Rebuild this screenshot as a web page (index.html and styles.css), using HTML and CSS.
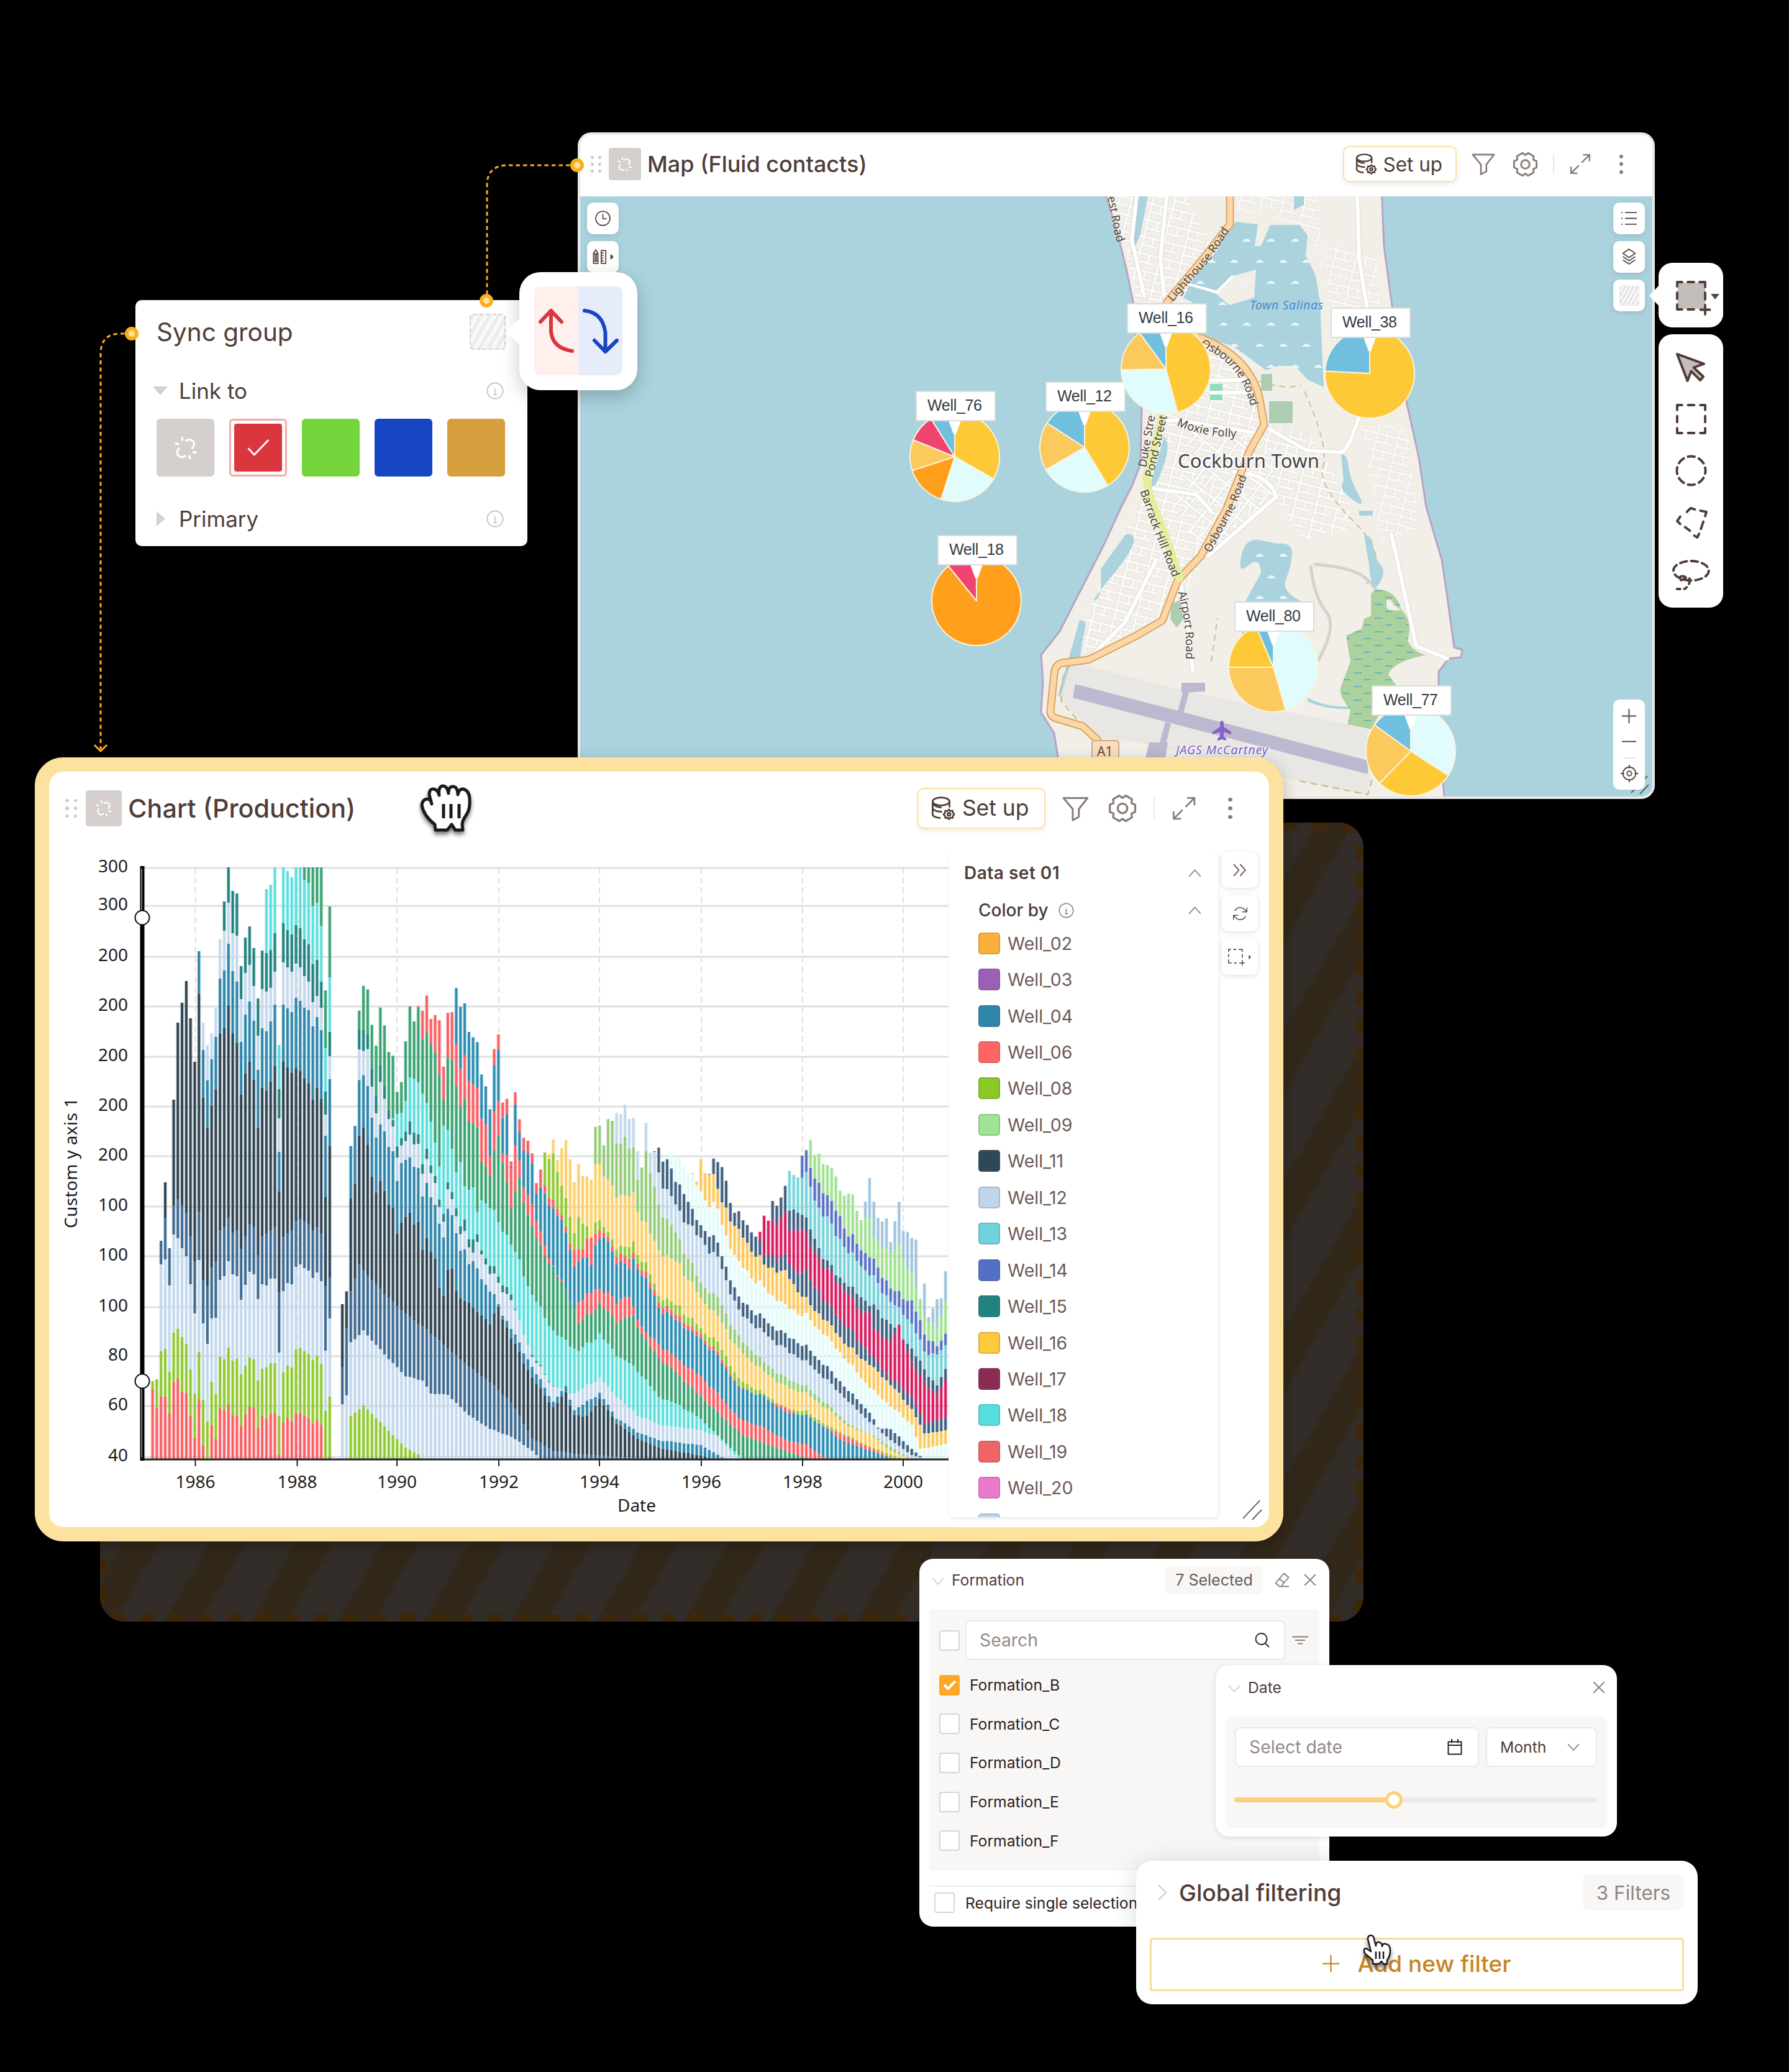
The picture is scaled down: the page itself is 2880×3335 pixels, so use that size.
FILE: index.html
```html
<!DOCTYPE html>
<html lang="en">
<head>
    <meta charset="UTF-8">
    <meta name="viewport" content="width=device-width, initial-scale=1.0">
    <title>Dashboard sync and filtering</title>
    <link rel="stylesheet" href="styles.css">
</head>
<body>
    <svg class="defs" width="0" height="0">
        <symbol id="unlink" viewBox="0 0 24 24"><path d="M12 5.500a4.600 4.600 0 0 1 7.500 5.200l-1.600 2M12 19a4.600 4.600 0 0 1-7.800-4.800l1.400-2.200M8.300 1l.6 4M1.500 7.500l4 .8M15.500 19l.5 4M18.600 16l4 .6" /></symbol>
        <symbol id="info" viewBox="0 0 24 24"><circle cx="12" cy="12" r="10.8" /><path d="M10.5 10.5H12V17M10 17h4.5M12 6.8v.6" /></symbol>
        <symbol id="db" viewBox="0 0 24 24"><ellipse cx="10" cy="5" rx="8.5" ry="4" /><path d="M1.500 5v13c0 2 3.500 3.500 8 3.700M18.500 5v6M1.500 11.500c0 2.200 3.800 4 9.500 4M1.500 6.500c1 3.500 6 4.500 9 4.500" /><path d="M18 13.200l1.500 1.500 2.200-.3.400 2.200 1.400 1.400-1.400 1.500-.4 2.200-2.200-.3-1.500 1.600-1.500-1.600-2.200.3-.4-2.200-1.400-1.500 1.400-1.400.4-2.200 2.200.3z" /><circle cx="18" cy="18" r="1.500" /></symbol>
        <symbol id="funnel" viewBox="0 0 24 24"><path d="M1.200 2.500h21.600L15 12.500v7l-5.500 3v-10z" /></symbol>
        <symbol id="gear" viewBox="0 0 24 24"><path d="M22.600 9v6l-3.100 1.400.4 3.200-5.200 3.100-2.700-2-2.700 2-5.200-3.100.4-3.200L1.400 15V9l3.100-1.400-.4-3.200 5.200-3.100 2.700 2 2.700-2 5.200 3.100-.4 3.200z" /><circle cx="12" cy="12" r="4" /></symbol>
        <symbol id="expand" viewBox="0 0 24 24"><path d="M15 1.500h7.500V9M22 2l-8.500 8.500M9 22.500H1.500V15M2 22l8.500-8.500" /></symbol>
        <symbol id="down" viewBox="0 0 24 24"><path d="M1.500 6L12 18 22.500 6" /></symbol>
        <symbol id="up" viewBox="0 0 24 24"><path d="M1.500 18L12 6l10.500 12" /></symbol>
        <symbol id="close" viewBox="0 0 24 24"><path d="M1.500 1.500l21 21M22.500 1.500l-21 21" /></symbol>
        <symbol id="plus" viewBox="0 0 24 24"><path d="M12 0v24M0 12h24" /></symbol>
    </svg>

    <!-- drop zone behind the chart -->
    <svg class="dropzone" viewBox="0 0 2034 1286">
        <defs>
            <pattern id="stripes" width="120.600" height="120.600" patternUnits="userSpaceOnUse" patternTransform="translate(48 1140) rotate(30)">
                <rect width="51" height="121" fill="#32281a" />
            </pattern>
        </defs>
        <rect width="2034" height="1286" rx="40" fill="#322d29" />
        <rect width="2034" height="1286" rx="40" fill="url(#stripes)" />
        <rect class="dashes" x="6" y="6" width="2022" height="1274" rx="34" />
    </svg>

    <!-- map -->
    <section class="window map-window">
        <header class="window-head">
            <span class="grip"><i></i><i></i><i></i><i></i><i></i><i></i></span>
            <span class="sync-box"><svg><use href="#unlink" /></svg></span>
            <h2>Map (Fluid contacts)</h2>
            <button class="setup"><svg><use href="#db" /></svg><span>Set up</span></button>
            <svg class="ico funnel"><use href="#funnel" /></svg>
            <svg class="ico gear"><use href="#gear" /></svg>
            <span class="rule"></span>
            <svg class="ico expand"><use href="#expand" /></svg>
            <span class="more"><i></i><i></i><i></i></span>
        </header>
        <div class="map-body">
            <svg class="map" viewBox="934 316 1726 966">
                <defs>
                    <pattern id="streets" width="34" height="27" patternUnits="userSpaceOnUse" patternTransform="rotate(14)">
                        <path d="M0 5H34M9 0V27M9 18H34M25 5V18" fill="none" stroke="#d9d5d0" stroke-width="5" />
                        <path d="M0 5H34M9 0V27M9 18H34M25 5V18" fill="none" stroke="#fff" stroke-width="3.400" />
                    </pattern>
                    <pattern id="streets2" width="44" height="32" patternUnits="userSpaceOnUse" patternTransform="rotate(38)">
                        <path d="M0 6H44M12 0V32M30 6V32" fill="none" stroke="#d9d5d0" stroke-width="5" />
                        <path d="M0 6H44M12 0V32M30 6V32" fill="none" stroke="#fff" stroke-width="3.400" />
                    </pattern>
                    <pattern id="marsh" width="34" height="22" patternUnits="userSpaceOnUse">
                        <path d="M3 5h13M20 16h11" stroke="#6fb0bd" stroke-width="2" />
                    </pattern>
                    <path id="p-light" d="M1884 483L1945 414 1979 362V316" />
                    <path id="p-osb1" d="M1934 553Q2012 583 2023 680" />
                    <path id="p-osb2" d="M1944 888L1985 812 2020 718" />
                    <path id="p-barrack" d="M1840 789L1862 852 1895 934" />
                    <path id="p-airport" d="M1901 952Q1918 1010 1913 1075" />
                    <path id="p-moxie" d="M1896 680Q1940 700 2010 699" />
                    <path id="p-west" d="M1788 316L1800 380 1808 400" />
                </defs>
                <rect x="934" y="316" width="1726" height="966" fill="#aad3de" />
                <path class="land" d="M1776 300L1800 379 1813 432 1824 486 1838 659 1836 747 1822 783 1804 818 1776 879 1734 961 1706 1016 1676 1054 1679 1098 1676 1147 1697 1180 1703 1218 1710 1290H2326L2323 1260 2310 1180 2316 1103V1081L2332 1060 2352 1058 2354 1046 2341 1042 2330 962 2321 901 2296 816 2284 736 2264 646 2238 471 2228 396 2224 300z" />
                <path d="M1790 316L1912 316 1960 420 1900 480 1960 560 2030 610 2030 680 2110 700 2170 800 2175 850 2100 870 2050 800 1940 900 1890 980 1760 1050 1720 1045 1790 900 1845 780 1850 640 1822 440z" fill="url(#streets)" opacity=".8" />
                <path d="M1920 690L2030 690 2060 800 1940 890 1890 820z" fill="url(#streets2)" />
                <path d="M1990 316h130l20 250-10-120-20-80-70-20-50-10zM2135 390l80 20 15 140-90-30zM2190 680l75 10 20 160-60 20z" fill="url(#streets)" opacity=".65" />
                <g fill="none" stroke="#d6d1cb" stroke-width="2">
                    <path d="M2100 630q40 90 30 120t50 90 20 100M1995 600q60 30 100 20M1950 1065l10-70M2060 1000q10 40 20 70M1900 1110l70 40 70 60" stroke="#d0bd98" stroke-dasharray="10 7" />
                    <path d="M2115 908q60 5 80 20t45 60M2110 910q5 50 25 75t-20 90" stroke-width="5" />
                </g>
                <path class="water" d="M1989 357L2025 361 2020 396 2030 396 2045 362 2092 362 2105 379 2102 411 2118 443 2125 486 2128 557 2131 623 2105 611 2085 589 2058 589 2038 596 1985 557 1939 543 1900 520 1919 486 1905 480 1919 450 1959 404 1972 379zM2083 316h16v14l-16 8z" />
                <path class="land-flat" d="M1915 459L1960 470 1985 444 2022 434 2019 479 1979 491 1958 473z" />
                <path d="M1912 457l47 13 26-26" fill="none" stroke="#fff" stroke-width="4" />
                <path class="water" d="M1826 316h22l-12 60-14 36zM2159 731q10 0 12 20t16 45-10 8-14-30zM2188 822h22v8h-22zM2196 862q12-2 15 18t12 30-3 30-16-30zM2058 875q24-2 22 18t-10 40 28 36v20l-40 60-60-20 8-63 24-44q-2-28-20-12t-12-14 28-27zM1812 860q18-2 12 16t-38 56-22 34 8-50zM1738 998q12 0 9 12t-10 60-34 50zM1874 703q12 10-2 50t-20 26zM2105 1123q30 16 70 14v4q-40 2-70-12z" />
                <g class="foams" id="foams"></g>
                <path d="M2220 949Q2247 950 2256 981 2275 1000 2266 1031 2275 1050 2296 1054 2240 1066 2235 1086L2247 1102 2212 1165 2196 1205 2165 1190 2174 1142Q2155 1120 2158 1107L2174 1065 2167 1023 2192 1012 2196 996 2207 991V958Q2210 948 2220 949z" fill="#abd29e" />
                <path d="M2220 949Q2247 950 2256 981 2275 1000 2266 1031 2275 1050 2296 1054 2240 1066 2235 1086L2247 1102 2212 1165 2196 1205 2165 1190 2174 1142Q2155 1120 2158 1107L2174 1065 2167 1023 2192 1012 2196 996 2207 991V958Q2210 948 2220 949z" fill="url(#marsh)" />
                <path class="land-flat" d="M2232 966q8-4 12 8l12 8q-20 2-24-4z" />
                <path d="M2043 646h38v35h-38zM2030 602h18v27h-18zM1886 972l14-6 6 30-12 14-10-14z" fill="#adcdb0" />
                <path d="M1948 618h20v26h-20z" fill="#88e0bd" />
                <path d="M1724 1065L1900 1110 2214 1175 2202 1279 2092 1257 1841 1197 1767 1186 1706 1125z" fill="#e9e7e4" />
                <path d="M2092 1257l110 22 12-44M1724 1070q-20 20-15 60l40 45" fill="none" stroke="#d0bd98" stroke-width="2.500" stroke-dasharray="11 7" />
                <path d="M1731 1101L2202 1224V1246L1727 1123zM1905 1112l9 3-10 36-9-3zM1876 1162l9 3-10 40-10-3zM1850 1195h30l-4 26h-32zM1902 1099h38v14l-38 2z" fill="#bbb8d0" />
                <g class="road white">
                    <path d="M2037 687L2104 725 2159 728Q2170 726 2187 673M2055 799L1945 895M1870 678L1896 676 2022 697M1847 785L1926 796 1951 824M1985 760Q2040 760 2055 799M1902 944L1912 1000 1920 1079M1905 612H2018M1950 632H2012M1830 316l-8 70 20 90M2185 316l3 100 16 100M1878 316l-10 100 6 60M2240 860l40 180 50 20M1751 1062l60-60 50-100" />
                </g>
                <g class="road">
                    <path class="casing" d="M1980 300V361L1939 414 1879 486 1865 520M1922 540Q2012 570 2028 643L2035 684 2012 725 1975 818 1933 895 1896 934 1871 999 1828 1024 1752 1062 1710 1067Q1698 1070 1697 1085L1691 1145Q1691 1153 1700 1156L1743 1169 1767 1191" />
                    <path class="fill" d="M1980 300V361L1939 414 1879 486 1865 520M1922 540Q2012 570 2028 643L2035 684 2012 725 1975 818 1933 895 1896 934 1871 999 1828 1024 1752 1062 1710 1067Q1698 1070 1697 1085L1691 1145Q1691 1153 1700 1156L1743 1169 1767 1191" />
                    <path class="lime" d="M1871 668L1846 769 1850 797 1875 860 1899 930" />
                </g>
                <g class="road-name">
                    <text><textPath href="#p-light">Lighthouse Road</textPath></text>
                    <text><textPath href="#p-osb1">Osbourne Road</textPath></text>
                    <text><textPath href="#p-osb2">Osbourne Road</textPath></text>
                    <text><textPath href="#p-barrack">Barrack Hill Road</textPath></text>
                    <text><textPath href="#p-airport">Airport Road</textPath></text>
                    <text><textPath href="#p-moxie">Moxie Folly</textPath></text>
                    <text><textPath href="#p-west">est Road</textPath></text>
                    <text transform="translate(1840 752) rotate(-80)">Duke Stre</text>
                    <text transform="translate(1851 768) rotate(-77)">Pond Street</text>
                </g>
                <text class="town" x="1896" y="753" textLength="228">Cockburn Town</text>
                <text class="lake-name" x="2012" y="498" textLength="118">Town Salinas</text>
                <path d="M1967 1160q3 0 3 6v4l12 8v4l-12-4v7l4 4v3l-7-2-7 2v-3l4-4v-7l-12 4v-4l12-8v-4q0-6 3-6z" fill="#8461c4" />
                <text class="airport" x="1893" y="1214" textLength="148">JAGS McCartney</text>
                <rect x="1758" y="1192" width="43" height="40" rx="4" fill="#f6dcc0" stroke="#d6a87e" stroke-width="2" />
                <text class="badge" x="1766" y="1217">A1</text>
                <g id="wells"></g>
            </svg>
            <div class="map-tools left">
                <span class="tool"><svg viewBox="0 0 24 24"><circle cx="12" cy="12" r="11" /><path d="M12 5v7.500h6" /></svg></span>
                <span class="tool"><svg class="wide" viewBox="0 0 34 24"><path d="M2 6.500L5.500 1 9 6.500V22H2zM2 7h7M2 18.500h7M4.500 7v11M6.700 7v11M14 2h7v20h-7zM14 6h3.500M14 10h3.500M14 14h3.500M14 18h3.500" /><path d="M29 9l3 3-3 3z" fill="#5a4741" /></svg></span>
            </div>
            <div class="map-tools right">
                <span class="tool"><svg viewBox="0 0 24 24"><path d="M6 3h18M6 12h18M6 21h18M0 3h2M0 12h2M0 21h2" /></svg></span>
                <span class="tool"><svg viewBox="0 0 24 24"><path d="M12 0l9.500 6.500L12 13 2.500 6.500zM2.500 11.500L12 18l9.500-6.500M2.500 16.500L12 23l9.500-6.500" /></svg></span>
                <span class="tool"><span class="hatch"></span></span>
            </div>
            <svg class="resize" viewBox="0 0 30 30"><path d="M1 28L27 1M15 30L29 15" /></svg>
            <div class="zoom">
                <svg viewBox="0 0 24 24"><use href="#plus" /></svg>
                <svg viewBox="0 0 24 24"><path d="M0 12h24" /></svg>
                <span class="zoom-rule"></span>
                <svg class="target" viewBox="0 0 30 30"><circle cx="15" cy="15" r="11" /><circle cx="15" cy="15" r="4" /><path d="M15 0v6M15 24v6M0 15h6M24 15h6" /></svg>
            </div>
        </div>
    </section>

    <!-- selection tools -->
    <aside class="select-current">
        <svg viewBox="0 0 72 50">
            <rect x="3" y="3" width="44" height="42" fill="#c4bebb" stroke="none" />
            <path d="M2 9V2h8M19 2h10M38 2h9v8M47 19v11M2 19v10M2 38v8h8M19 46h10M47 39v15M39.500 46.500h15" />
            <path d="M56 21h14l-7 9z" fill="#5a4741" stroke="none" />
        </svg>
    </aside>
    <aside class="select-tools">
        <svg viewBox="0 0 50 50"><path d="M2 3L46 19 29 25 45 40 40 46 25 31 19 47z" fill="#c4bebb" /></svg>
        <svg viewBox="0 0 50 50"><path d="M2 10V2h8M20 2h10M40 2h8v8M48 20v10M2 20v10M2 40v8h8M20 48h10M48 40v8H40" /></svg>
        <svg viewBox="0 0 50 50"><circle cx="25" cy="25" r="23.500" stroke-dasharray="11 7.460" stroke-dashoffset="6" /></svg>
        <svg viewBox="0 0 50 50"><path d="M18 8l6-6 7 2M40 6l10 2-2 7M45 24l-4 12M38 44l-3 6-5-3M23 39l-8-6M7 28L2 23l5-7" /></svg>
        <svg viewBox="0 0 62 50"><ellipse cx="31" cy="20" rx="29" ry="16" stroke-dasharray="11 7" /><path d="M21 30q-8-3-10 3 3 5 9 0 9-6 9 4-2 9-9 13M8 50h5" stroke-dasharray="9 7" /></svg>
    </aside>

    <!-- sync group -->
    <section class="sync">
        <header><h2>Sync group</h2><span class="hatch"></span></header>
        <div class="sync-row"><i class="tri open"></i><span>Link to</span><svg class="info"><use href="#info" /></svg></div>
        <div class="swatches">
            <span class="none"><svg><use href="#unlink" /></svg></span>
            <span class="red"><b><svg viewBox="0 0 36 28"><path d="M1 15l10 11L35 1" /></svg></b></span>
            <span class="green"></span>
            <span class="blue"></span>
            <span class="gold"></span>
        </div>
        <div class="sync-row primary"><i class="tri"></i><span>Primary</span><svg class="info"><use href="#info" /></svg></div>
    </section>

    <div class="direction">
        <svg viewBox="0 0 142 143">
            <path d="M27 39V72Q29 99 61 104M10 57L27 39 44 57" stroke="#d9363e" />
            <path d="M81 39Q110 42 114.500 74V105M97 87l17.500 18L133 87" stroke="#1746c4" />
        </svg>
    </div>

    <svg class="wires" viewBox="0 0 1000 1220">
        <path d="M929 266H814Q784 268 784 298V484M212 537H192Q162 538 162 570V1206" stroke-dasharray="6.500 5" />
        <path d="M152 1199l10 10 10-10" />
        <g><circle cx="929" cy="266" r="8" /><circle cx="783" cy="484" r="8" /><circle cx="212" cy="537" r="8" /></g>
    </svg>

    <!-- chart -->
    <section class="window chart-window">
        <header class="window-head">
            <span class="grip"><i></i><i></i><i></i><i></i><i></i><i></i></span>
            <span class="sync-box"><svg><use href="#unlink" /></svg></span>
            <h2>Chart (Production)</h2>
            <button class="setup"><svg><use href="#db" /></svg><span>Set up</span></button>
            <svg class="ico funnel"><use href="#funnel" /></svg>
            <svg class="ico gear"><use href="#gear" /></svg>
            <span class="rule"></span>
            <svg class="ico expand"><use href="#expand" /></svg>
            <span class="more"><i></i><i></i><i></i></span>
        </header>
        <div class="chart-body">
            <svg class="chart" id="chart" viewBox="79 1360 1449 1097"></svg>
            <div class="legend">
                <div class="legend-title"><b>Data set 01</b><svg class="chev"><use href="#up" /></svg></div>
                <div class="legend-sub"><span>Color by</span><svg class="info"><use href="#info" /></svg><svg class="chev"><use href="#up" /></svg></div>
                <ul id="legend"></ul>
            </div>
            <div class="chart-tools">
                <span class="tool"><svg viewBox="0 0 24 24"><path d="M2 3l8 9-8 9M12 3l8 9-8 9" /></svg></span>
                <span class="tool"><svg viewBox="0 0 28 28"><path d="M4 9Q8 3 14 3q6 0 11 7M26 3v8h-8M24 19q-4 6-10 6-6 0-11-7M2 25v-8h8" /></svg></span>
                <span class="tool"><svg class="wide" viewBox="0 0 42 30"><path d="M2 6V2h4M10 2h5M19 2h6v4M25 10v6M2 10v5M2 19v6h5M11 25h5M25 20v9M20 25h9" /><path d="M36 11l4 4-4 4z" fill="#5a4741" stroke="none" /></svg></span>
            </div>
            <svg class="resize" viewBox="0 0 34 34"><path d="M1 32L30 1M17 34L33 17" /></svg>
        </div>
    </section>

    <svg class="cursor grab" viewBox="-4 -4 88 84"><path d="M0 31Q1 22 8 21 15 21 16 29L12 14Q12 4 19 5 26 6 28 15 26 1 34 0 41 0 43 12 43 0 51 1 58 2 58 14 60 4 67 5 77 8 77 22 78 37 72 46 65 56 65 62L66 71 54 71 48 62 41 71H22L21 62Q3 48 0 31z" /><path d="M35 29V52M47 29V52M60 29V52" /></svg>

    <!-- formation filter -->
    <section class="filter formation">
        <header><svg class="fold"><use href="#down" /></svg><h3>Formation</h3><span class="tag">7 Selected</span><svg class="eraser" viewBox="0 0 24 24"><path d="M8 22.500L1.500 17 15 1.500l7.500 6.500L10 22.500zM7.500 10l8 7M8 22.500h15" /></svg><svg class="x"><use href="#close" /></svg></header>
        <div class="panel">
            <div class="search-row">
                <i class="check"></i>
                <div class="input">Search<svg viewBox="0 0 24 24"><circle cx="10.500" cy="10" r="9" /><path d="M17 17l6 6" /></svg></div>
                <svg class="sort" viewBox="0 0 26 14"><path d="M0 1.500h26M5 7h16M9 12.500h8" /></svg>
            </div>
            <div class="option"><i class="check on"><svg viewBox="0 0 22 18"><path d="M2 9l6 6L20 3" /></svg></i>Formation_B</div>
            <div class="option"><i class="check"></i>Formation_C</div>
            <div class="option"><i class="check"></i>Formation_D</div>
            <div class="option"><i class="check"></i>Formation_E</div>
            <div class="option"><i class="check"></i>Formation_F</div>
        </div>
        <footer><i class="check"></i>Require single selection</footer>
    </section>

    <!-- date filter -->
    <section class="filter date">
        <header><svg class="fold"><use href="#down" /></svg><h3>Date</h3><svg class="x"><use href="#close" /></svg></header>
        <div class="panel">
            <div class="date-row">
                <div class="input">Select date<svg viewBox="0 0 24 26"><path d="M1.500 4.500h21v20h-21zM1.500 10h21M7 0v6.500M17 0v6.500" /></svg></div>
                <div class="select">Month<svg><use href="#down" /></svg></div>
            </div>
            <div class="slider"><span class="slider-fill"></span><i></i></div>
        </div>
    </section>

    <!-- global filtering -->
    <section class="global">
        <header><svg viewBox="0 0 14 26"><path d="M1 1l12 12L1 25" /></svg><h2>Global filtering</h2><span class="tag">3 Filters</span></header>
        <button class="add"><svg><use href="#plus" /></svg>Add new filter</button>
    </section>

    <svg class="cursor point" viewBox="-3 -3 52 54"><path d="M7 6Q7 0 12 0 16 0 17 6L20 17Q20 10 25 11 30 12 30 18 31 12 36 14 43 15 43 24 43 33 38 40V46L32 46 29 42 25 46H15V40L2 29Q-1 21 4 21L12 26z" /><path d="M20 26V38M26 26V38M32 26V38" /></svg>

    <script src="script.js"></script>
</body>
</html>
```

FILE: styles.css
```css
* {
    box-sizing: border-box;
}
body {
    margin: 0;
    position: relative;
    width: 2880px;
    height: 3335px;
    overflow: hidden;
    background: #000;
    color: #503d38;
    font-family: Inter, "Liberation Sans", sans-serif;
    white-space: nowrap;
}
h2, h3, ul {
    margin: 0;
    padding: 0;
    font-weight: 400;
    list-style: none;
}
svg {
    display: block;
    flex: none;
    fill: none;
    stroke: currentColor;
    stroke-linejoin: round;
    overflow: visible;
}
button {
    font-family: inherit;
    color: inherit;
    background: #fff;
    display: flex;
    align-items: center;
}
.defs {
    position: absolute;
}

/* windows */
.window {
    position: absolute;
    background: #fff;
    display: flex;
    flex-direction: column;
}
.window-head {
    flex: none;
    display: flex;
    align-items: center;
}
.window-head h2 {
    font-size: 3.6em;
    font-weight: 450;
    margin-right: auto;
}
.grip {
    display: grid;
    grid-template-columns: repeat(2, .5em);
    gap: .6em .7em;
    margin-right: 1.2em;
}
.grip i {
    height: .5em;
    border-radius: 50%;
    background: #cfcac8;
}
.sync-box {
    width: 5.15em;
    height: 5.15em;
    margin-right: 1.05em;
    border-radius: .4em;
    background: #d5d0ce;
    display: flex;
    align-items: center;
    justify-content: center;
    color: #fff;
}
.sync-box svg {
    width: 2.5em;
    height: 2.5em;
    stroke-width: 2;
}
.setup {
    height: 5.85em;
    width: 18.3em;
    padding: 0 0 0 1.8em;
    gap: 1.05em;
    font-size: 1em;
    border: .26em solid #fbe2a4;
    border-radius: 1em;
    box-shadow: 0 4px 8px rgba(0, 0, 0, .08);
}
.setup span {
    font-size: 3.15em;
}
.setup svg {
    width: 3.4em;
    height: 3.4em;
    stroke-width: 1.7;
}
.ico {
    color: #8a7d79;
    stroke-width: 1.7;
}
.funnel {
    width: 3.8em;
    height: 3.8em;
    margin-left: 2.4em;
}
.gear {
    width: 4.1em;
    height: 4.1em;
    margin-left: 2.8em;
}
.rule {
    width: 2px;
    height: 3.2em;
    margin: 0 2.5em 0 2.4em;
    background: #ebe8e7;
}
.expand {
    width: 3.4em;
    height: 3.4em;
}
.more {
    display: grid;
    gap: .65em;
    margin-left: 4.6em;
}
.more i {
    width: .6em;
    height: .6em;
    border-radius: 50%;
    background: #8a7d79;
}
.tool {
    display: flex;
    align-items: center;
    justify-content: center;
    width: 51px;
    height: 51px;
    border-radius: 10px;
    background: #fff;
    color: #5a4741;
    box-shadow: 0 2px 8px rgba(0, 0, 0, .12);
}
.tool svg {
    width: 25px;
    height: 25px;
    stroke-width: 1.7;
}
.tool .wide {
    width: 36px;
}
.hatch {
    border: 1px dashed #cfcfcf;
    border-radius: 4px;
    background: repeating-linear-gradient(120deg, #ececec 0 6px, #f8f8f8 6px 12px);
}

/* map window */
.map-window {
    left: 930px;
    top: 213px;
    width: 1734px;
    height: 1073px;
    border: 4px solid #ebe9e8;
    border-radius: 22px;
    overflow: hidden;
}
.map-window .window-head {
    height: 99px;
    padding: 0 47px 5px 17px;
    font-size: 10px;
}
.map-body {
    position: relative;
    flex: 1;
    overflow: hidden;
}
.map {
    width: 1726px;
    height: 966px;
    stroke: none;
    overflow: hidden;
}
.land {
    fill: #f2efe9;
    stroke: #b9a3c4;
    stroke-width: 3;
}
.land-flat {
    fill: #f2efe9;
}
.water {
    fill: #aad3de;
}
.foams {
    fill: #e8f6fa;
}
.road {
    fill: none;
    stroke-linecap: round;
}
.white path {
    stroke: #fff;
    stroke-width: 6;
    filter: drop-shadow(0 0 1px #c9c4bf);
}
.casing {
    stroke: #d9a565;
    stroke-width: 13;
}
.fill {
    stroke: #fcd6a4;
    stroke-width: 9;
}
.lime {
    stroke: #e6ee9c;
    stroke-width: 13;
}
.road-name, .town, .lake-name, .airport, .badge {
    font-family: "Noto Sans", "Open Sans", sans-serif;
    paint-order: stroke;
}
.road-name {
    font-size: 18.5px;
    fill: #4c4238;
    stroke: rgba(255, 255, 255, .45);
    stroke-width: 2;
}
.road-name text {
    dominant-baseline: middle;
}
.town {
    font-size: 31px;
    fill: #444;
    stroke: rgba(255, 255, 255, .8);
    stroke-width: 4;
}
.lake-name {
    font-size: 19.5px;
    font-style: italic;
    fill: #4a8ad0;
}
.airport {
    font-size: 20px;
    font-style: italic;
    fill: #8461c4;
    stroke: rgba(255, 255, 255, .6);
    stroke-width: 3;
}
.badge {
    font-size: 21px;
    fill: #6b4a33;
}
.well-pie path {
    stroke: #fbf3dd;
    stroke-width: 2;
}
.well-tag rect {
    fill: #fff;
    stroke: #dcdcdc;
    stroke-width: 2;
}
.well-tag text {
    font-family: "Liberation Sans", Arial, sans-serif;
    font-size: 25px;
    fill: #333a44;
}
.map-tools {
    position: absolute;
    top: 10px;
    display: grid;
    gap: 11px;
}
.map-tools.left {
    left: 11px;
}
.map-tools.right {
    right: 12px;
}
.map-tools .hatch {
    width: 32px;
    height: 32px;
    border-color: #e4e4e4;
    background: repeating-linear-gradient(120deg, #e4e4e4 0 3px, #fafafa 3px 6px);
}
.zoom {
    position: absolute;
    right: 12px;
    bottom: 11px;
    width: 51px;
    height: 145px;
    padding-top: 15px;
    border-radius: 10px;
    background: #fff;
    display: flex;
    flex-direction: column;
    align-items: center;
    gap: 18px;
    color: #5a4741;
}
.zoom svg {
    width: 23px;
    height: 23px;
    stroke-width: 2;
}
.zoom-rule {
    width: 20px;
    height: 2px;
    margin: -4px 0;
    background: #e8e5e4;
}
.zoom .target {
    width: 28px;
    height: 28px;
    margin-top: -4px;
}
.resize {
    position: absolute;
    right: 5px;
    bottom: 4px;
    width: 30px;
    height: 30px;
    color: #6b5d59;
    stroke-width: 2;
}

/* selection tools */
.select-current, .select-tools {
    position: absolute;
    left: 2670px;
    width: 104px;
    border-radius: 22px;
    background: #fff;
    stroke-linecap: round;
}
.select-current {
    top: 423px;
    height: 104px;
    padding: 29px 0 0 28px;
}
.select-current::before {
    content: "";
    position: absolute;
    left: -15px;
    top: 36px;
    border: solid transparent;
    border-width: 17px 16px 17px 0;
    border-right-color: #fff;
}
.select-current svg {
    width: 72px;
    height: 50px;
    stroke-width: 3.8;
}
.select-tools {
    top: 538px;
    height: 440px;
    padding-top: 29px;
    display: flex;
    flex-direction: column;
    align-items: center;
    gap: 34px;
}
.select-tools svg {
    height: 49px;
    stroke-width: 4;
}

/* sync group */
.sync {
    position: absolute;
    left: 218px;
    top: 483px;
    width: 631px;
    height: 396px;
    padding: 21px 35px 0 34px;
    border-radius: 10px;
    background: #fff;
}
.sync header {
    display: flex;
    align-items: center;
    justify-content: space-between;
    height: 60px;
}
.sync h2 {
    font-size: 40.5px;
}
.sync .hatch {
    width: 58px;
    height: 58px;
    border-width: 2px;
    border-radius: 6px;
}
.sync-row {
    display: flex;
    align-items: center;
    height: 44px;
    margin-top: 43px;
    padding-right: 3px;
    font-size: 35px;
}
.sync-row span {
    flex: 1;
}
.sync-row .info {
    width: 28px;
    height: 28px;
    color: #cfcac8;
    stroke-width: 1.8;
}
.tri {
    width: 36px;
}
.tri::before {
    content: "";
    display: block;
    width: 0;
    border: solid transparent;
    border-width: 12px 0 12px 14px;
    border-left-color: #d5d0ce;
}
.tri.open::before {
    margin-left: -6px;
    border-width: 14px 12px 0;
    border-color: #d5d0ce transparent;
}
.swatches {
    display: flex;
    gap: 24px;
    margin-top: 23px;
}
.swatches > span {
    width: 93px;
    height: 93px;
    border-radius: 6px;
    display: flex;
    align-items: center;
    justify-content: center;
    color: #fff;
}
.swatches .none {
    background: #d5d0ce;
}
.swatches .none svg {
    width: 40px;
    height: 40px;
    stroke-width: 2;
}
.swatches .red {
    border: 3px solid #f4a9a6;
}
.swatches b {
    width: 77px;
    height: 77px;
    border-radius: 4px;
    background: #d9363e;
    display: flex;
    align-items: center;
    justify-content: center;
}
.swatches b svg {
    width: 36px;
    height: 27px;
    stroke-width: 3;
}
.swatches .green {
    background: #74d43c;
}
.swatches .blue {
    background: #1746c4;
}
.swatches .gold {
    background: #d69e3c;
}
.sync-row.primary {
    margin-top: 46px;
}

.direction {
    position: absolute;
    left: 836px;
    top: 438px;
    width: 190px;
    height: 190px;
    padding: 23px 24px;
    border-radius: 34px;
    background: #fff;
    box-shadow: 0 10px 30px rgba(0, 0, 0, .22);
}
.direction::before {
    content: "";
    position: absolute;
    left: -22px;
    top: 74px;
    border: solid transparent;
    border-width: 22px 23px 22px 0;
    border-right-color: #fff;
}
.direction svg {
    width: 142px;
    height: 143px;
    border-radius: 10px;
    background: linear-gradient(90deg, #ffefed 50%, #e7ecfa 50%);
    stroke-width: 6;
    stroke-linecap: round;
}
.wires {
    position: absolute;
    left: 0;
    top: 0;
    width: 1000px;
    height: 1220px;
    stroke: #fcae1e;
    stroke-width: 3;
}
.wires g {
    fill: #fde3a4;
    stroke-width: 6;
}

/* chart window */
.dropzone {
    position: absolute;
    left: 161px;
    top: 1324px;
    width: 2034px;
    height: 1286px;
    stroke: none;
}
.dashes {
    stroke: #3d270a;
    stroke-width: 12;
    stroke-dasharray: 23.3 23.3;
}
.chart-window {
    left: 56px;
    top: 1219px;
    width: 2010px;
    height: 1262px;
    border: 23px solid #fde19f;
    border-radius: 46px;
    box-shadow: 0 8px 24px rgba(0, 0, 0, .25);
}
.chart-window .window-head {
    height: 118px;
    padding: 0 59px 0 26px;
    font-size: 11.26px;
}
.chart-window h2 {
    font-size: 3.67em;
}
.chart-window .sync-box {
    margin-right: .95em;
}
.chart-body {
    position: relative;
    display: flex;
    flex: 1;
}
.chart {
    width: 1449px;
    height: 1097px;
    stroke: none;
    overflow: hidden;
    font-family: "Noto Sans", "Open Sans", sans-serif;
    font-size: 28px;
}
.grid-line {
    stroke: #e0e0e0;
    stroke-width: 3;
}
.grid-line.v {
    stroke-width: 2;
    stroke-dasharray: 10 6;
}
.bars path {
    stroke-width: 3.9;
}
.bars .haze {
    stroke-width: 6.8;
    opacity: .16;
}
.axis-text {
    fill: #1c1c1c;
}
.legend {
    width: 433px;
    height: 1072px;
    margin-top: 10px;
    padding: 13px 27px 0 24px;
    overflow: hidden;
    border-radius: 8px;
    background: #fff;
    box-shadow: 1px 3px 6px rgba(0, 0, 0, .08);
    font-size: 28px;
}
.legend-title, .legend-sub {
    display: flex;
    align-items: center;
    height: 44px;
}
.legend-title b {
    font-weight: 600;
    letter-spacing: .5px;
}
.legend-sub {
    margin: 16px 0 0 23px;
    font-weight: 500;
}
.legend-sub .info {
    width: 25px;
    height: 25px;
    margin-left: 16px;
    stroke-width: 1.4;
    color: #8a7d79;
}
.chev {
    width: 21px;
    height: 21px;
    margin-left: auto;
    stroke-width: 2;
    color: #8a7d79;
}
.legend ul {
    margin: 2px 0 0 23px;
}
.legend li {
    display: flex;
    align-items: center;
    height: 58.45px;
    gap: 12px;
    font-size: 28.5px;
    color: #6b5a55;
}
.legend li i {
    width: 35px;
    height: 35px;
    border: 2px solid rgba(90, 90, 90, .22);
    border-radius: 5px;
}
.chart-tools {
    display: grid;
    gap: 12px;
    align-content: start;
    margin: 11px 0 0 6px;
}
.chart-tools .tool {
    width: 58px;
    height: 58px;
}
.chart-tools .wide {
    width: 40px;
    height: 29px;
}
.chart-window .resize {
    right: 11px;
    bottom: 12px;
    width: 32px;
    height: 32px;
}

.cursor {
    position: absolute;
    fill: #fff;
    stroke: #1b1b1b;
    filter: drop-shadow(0 5px 3px rgba(0, 0, 0, .5));
}
.grab {
    left: 675px;
    top: 1261px;
    width: 88px;
    height: 84px;
    stroke-width: 5;
}
.point {
    left: 2192px;
    top: 3112px;
    width: 52px;
    height: 54px;
    stroke-width: 2.5;
}

/* filters */
.filter {
    position: absolute;
    padding: 0 16px;
    border-radius: 22px;
    background: #fff;
    font-size: 24.7px;
    color: #2d2321;
    box-shadow: 0 2px 10px rgba(0, 0, 0, .12);
}
.filter header {
    display: flex;
    align-items: center;
    color: #503d38;
}
.filter h3 {
    font-size: 24.7px;
    margin-right: auto;
}
.fold {
    width: 20px;
    height: 20px;
    margin: 4px 12px 0 4px;
    color: #cfcac8;
    stroke-width: 2;
}
.x {
    width: 20px;
    height: 20px;
    color: #8a7d79;
    stroke-width: 2.2;
}
.eraser {
    width: 24px;
    height: 24px;
    margin: 0 23px 0 19px;
    color: #8a7d79;
    stroke-width: 1.8;
}
.tag {
    display: flex;
    align-items: center;
    justify-content: center;
    border-radius: 6px;
    background: #f8f7f6;
}
.panel {
    border-radius: 8px;
    background: #f8f7f6;
}
.check {
    width: 33px;
    height: 33px;
    flex: none;
    border: 2px solid #d9d5d3;
    border-radius: 4px;
    background: #fff;
}
.check.on {
    display: flex;
    align-items: center;
    justify-content: center;
    border: 0;
    background: #ffa826;
    color: #fff;
}
.check svg {
    width: 22px;
    height: 18px;
    stroke-width: 4;
}
.input, .select {
    display: flex;
    align-items: center;
    justify-content: space-between;
    height: 64px;
    border: 2px solid #ebe9e8;
    border-radius: 8px;
    background: #fff;
}
.input {
    padding: 0 23px 0 21px;
    font-size: 28.3px;
    color: #948a87;
}
.input svg {
    width: 24px;
    height: 26px;
    color: #2d2321;
    stroke-width: 2;
}
.formation {
    left: 1480px;
    top: 2509px;
    width: 660px;
    height: 592px;
}
.formation header {
    height: 68px;
    padding-right: 5px;
}
.formation .tag {
    width: 157px;
    height: 45px;
    color: #6c5b56;
    font-size: 25px;
}
.formation .panel {
    height: 421px;
    margin-top: 13px;
    padding: 18px 18px 0 16px;
}
.search-row {
    display: flex;
    align-items: center;
    margin-bottom: 9px;
}
.search-row .input {
    width: 515px;
    margin: 0 11px 0 9px;
}
.sort {
    width: 26px;
    height: 14px;
    color: #8a7d79;
    stroke-width: 2;
}
.option {
    display: flex;
    align-items: center;
    gap: 16px;
    height: 62.6px;
}
.formation footer {
    display: flex;
    align-items: center;
    gap: 17px;
    height: 51px;
    margin-top: 24px;
    padding: 2px 0 0 8px;
    border-top: 2px solid #f0eeed;
}
.date {
    left: 1957px;
    top: 2680px;
    width: 646px;
    height: 276px;
}
.date header {
    height: 72px;
    padding-right: 3px;
}
.date .panel {
    height: 179px;
    margin-top: 11px;
    padding: 17px 16px 0 15px;
}
.date-row {
    display: flex;
    gap: 11px;
}
.date-row .input {
    width: 393px;
    padding-right: 25px;
}
.select {
    flex: 1;
    padding: 0 26px 0 21px;
    color: #503d38;
}
.select svg {
    width: 20px;
    height: 20px;
    color: #8a7d79;
    stroke-width: 2.2;
}
.slider {
    position: relative;
    height: 8px;
    margin: 49px 0 0 -1px;
    border-radius: 4px;
    background: #ebeae9;
}
.slider-fill {
    display: block;
    width: 44%;
    height: 8px;
    border-radius: 4px;
    background: #fbd17b;
}
.slider i {
    position: absolute;
    left: 44%;
    top: -10px;
    width: 28px;
    height: 28px;
    margin-left: -14px;
    border: 5px solid #fbd17b;
    border-radius: 50%;
    background: #fff;
}
.global {
    position: absolute;
    left: 1829px;
    top: 2995px;
    width: 904px;
    height: 231px;
    padding: 21px 22px 0;
    border-radius: 26px;
    background: #fff;
    box-shadow: 0 4px 40px rgba(0, 0, 0, .14);
}
.global header {
    display: flex;
    align-items: center;
    height: 60px;
}
.global header svg {
    width: 14px;
    height: 26px;
    margin: 0 20px 0 13px;
    color: #cfcac8;
    stroke-width: 2;
}
.global h2 {
    font-size: 37.3px;
    font-weight: 500;
    margin-right: auto;
}
.global .tag {
    width: 163px;
    height: 58px;
    font-size: 31.5px;
    color: #8f8583;
    border-radius: 10px;
}
.add {
    width: 860px;
    height: 86px;
    margin-top: 43px;
    padding: 0 0 3px;
    justify-content: center;
    gap: 29px;
    border: 3px solid #f8dd9b;
    border-radius: 4px;
    font-size: 37px;
    font-weight: 450;
    color: #c98420;
}
.add svg {
    width: 27px;
    height: 27px;
    stroke-width: 2;
}
```

FILE: script.js
```js
const NS = 'http://www.w3.org/2000/svg';

function el(parent, tag, attrs, text) {
    const node = document.createElementNS(NS, tag);
    for (const key in attrs) node.setAttribute(key, attrs[key]);
    if (text) node.textContent = text;
    parent.appendChild(node);
    return node;
}

/* ---- map ---- */
const YELLOW = '#fec937', CYAN = '#e0fcfd', AMBER = '#fbc95c', BLUE = '#70bfdf', ORANGE = '#ff9f1c', PINK = '#f0436f';

// slices: [end angle clockwise from the top, colour]
const wells = [
    { name: 'Well_76', x: 1537, y: 735, slices: [[120, YELLOW], [198, CYAN], [252, ORANGE], [292, AMBER], [328, PINK], [360, BLUE]] },
    { name: 'Well_12', x: 1746, y: 720, slices: [[149, YELLOW], [240, CYAN], [303, AMBER], [360, BLUE]] },
    { name: 'Well_16', x: 1877, y: 594, slices: [[165, YELLOW], [269, CYAN], [324, AMBER], [360, BLUE]] },
    { name: 'Well_38', x: 2205, y: 601, slices: [[273, YELLOW], [360, BLUE]] },
    { name: 'Well_18', x: 1572, y: 967, slices: [[321, ORANGE], [360, PINK]] },
    { name: 'Well_80', x: 2050, y: 1074, slices: [[164, CYAN], [270, AMBER], [337, YELLOW], [360, BLUE]] },
    { name: 'Well_77', x: 2271, y: 1209, slices: [[123, CYAN], [224, YELLOW], [306, AMBER], [360, BLUE]] }
];

const layer = document.getElementById('wells');
for (const well of wells) {
    const pie = el(layer, 'g', { class: 'well-pie' });
    const r = 72;
    const at = deg => [well.x + r * Math.sin(deg * Math.PI / 180), well.y - r * Math.cos(deg * Math.PI / 180)].map(v => v.toFixed(1)).join(' ');
    let from = 0;
    for (const [to, fill] of well.slices) {
        el(pie, 'path', { d: `M${well.x} ${well.y}L${at(from)}A${r} ${r} 0 ${to - from > 180 ? 1 : 0} 1 ${at(to)}Z`, fill });
        from = to;
    }
    const tag = el(layer, 'g', { class: 'well-tag' });
    el(tag, 'path', { d: `M${well.x - 10} ${well.y - 58}h20l-8 22h-4z`, fill: '#fff' });
    el(tag, 'rect', { x: well.x - 62, y: well.y - 105, width: 127, height: 47 });
    el(tag, 'text', { x: well.x - 44, y: well.y - 74, textLength: 88 }, well.name);
}

const foams = document.getElementById('foams');
const foamRows = [[386, 0], [420, 1], [454, 0], [521, 0], [555, 1], [589, 2]];
for (const [y, kind] of foamRows) {
    const xs = kind === 1 ? [1987, 2028, 2066, 2103] : kind === 0 ? [2007, 2046, 2085] : [2046, 2085, 2122];
    for (const x of xs) el(foams, 'path', { d: `M${x - 7} ${y + 3}q7-10 14 0z` });
}
for (const [x, y] of [[1932, 454], [1968, 488], [1951, 420], [1970, 521], [2028, 893], [2066, 893], [2047, 928], [2028, 961], [2066, 961]]) {
    el(foams, 'path', { d: `M${x - 7} ${y + 3}q7-10 14 0z` });
}

/* ---- chart ---- */
const chart = document.getElementById('chart');
const TOP = 1396, BASE = 2349, LEFT = 229, RIGHT = 1527;

const yTicks = [[300, 1397], [300, 1458], [200, 1540], [200, 1620], [200, 1701], [200, 1781], [200, 1861], [100, 1942], [100, 2022], [100, 2104], [80, 2183], [60, 2263], [40, 2345]];
const xTicks = [[1986, 314.5], [1988, 478.5], [1990, 639], [1992, 803], [1994, 965], [1996, 1129], [1998, 1292], [2000, 1454]];

for (const [, y] of yTicks) el(chart, 'line', { class: 'grid-line', x1: LEFT, x2: RIGHT, y1: y, y2: y });
for (const [, x] of xTicks) el(chart, 'line', { class: 'grid-line v', x1: x, x2: x, y1: TOP, y2: BASE });

// first block, one row per month: tops of the stacked wells
const early = [
    [2236, 2223], [2267, 2220], [2248, 2175, 2035, 1997], [2248, 2171, 2027, 1960, 1903], [2275, 2208, 2069, 2009],
    [2225, 2145, 1987, 1940, 1770], [2220, 2139, 1993, 1930, 1646], [2240, 2152, 2009, 1940, 1614], [2243, 2163, 2022, 1952, 1579],
    [2279, 2204, 2067, 1990, 1639], [2315, 2243, 2114, 2030, 1709], [2253, 2176, 2028, 1950, 1600, 1531],
    [2327, 2253, 2130, 2060, 1767, 1690, 1646], [2349, 2288, 2163, 2070, 1816, 1739, 1682], [2294, 2224, 2122, 2040, 1780, 1705, 1663],
    [2316, 2244, 2121, 2030, 1754, 1669, 1622], [2267, 2184, 2060, 1980, 1664, 1575, 1512], [2270, 2188, 2054, 1975, 1655, 1562, 1498, 1451],
    [2261, 2169, 2030, 1960, 1619, 1519, 1453, 1396], [2278, 2190, 2051, 1984, 1663, 1563, 1502, 1434], [2279, 2187, 2054, 1980, 1679, 1580, 1506, 1438],
    [2295, 2212, 2092, 2010, 1762, 1677, 1608, 1555], [2277, 2198, 2068, 1990, 1728, 1633, 1566, 1509], [2264, 2185, 2047, 1970, 1709, 1612, 1553, 1491],
    [2266, 2188, 2051, 1975, 1738, 1643, 1587, 1526], [2299, 2222, 2091, 2020, 1816, 1722, 1667, 1607], [2279, 2203, 2067, 1990, 1751, 1655, 1592, 1530],
    [2284, 2201, 2069, 1985, 1756, 1660, 1596, 1534, 1431], [2276, 2194, 2058, 1980, 1741, 1644, 1590, 1529, 1424], [2275, 2194, 2058, 1975, 1716, 1617, 1564, 1502, 1396],
    [2342, 2279, 2177, 2080, 1918, 1854, 1800, 1753, 1682], [2290, 2209, 2078, 1990, 1709, 1617, 1549, 1486, 1396], [2282, 2198, 2065, 1985, 1718, 1623, 1557, 1497, 1402],
    [2288, 2201, 2067, 1980, 1727, 1629, 1564, 1504, 1412], [2275, 2172, 2039, 1965, 1720, 1606, 1551, 1489, 1396], [2275, 2170, 2035, 1962, 1724, 1611, 1557, 1494, 1396],
    [2279, 2175, 2041, 1965, 1736, 1622, 1571, 1512, 1416, 1396], [2283, 2179, 2045, 1970, 1744, 1626, 1580, 1520, 1421, 1396], [2292, 2189, 2057, 1980, 1770, 1652, 1613, 1552, 1458, 1396],
    [2286, 2182, 2048, 1975, 1751, 1637, 1603, 1545, 1453, 1396], [2293, 2195, 2062, 1985, 1769, 1658, 1622, 1580, 1490, 1396],
    [2349, 2271, 2174, 2070, 1927, 1828, 1794, 1757, 1687, 1594], [2345, 2248, 2122, 2056, 1845, 1737, 1700, 1661, 1573, 1459]
];
const earlyColors = ['#fb5f63', '#8fca33', '#c3d8ec', '#3d6b93', '#2f4453', '#2e86ab', '#c6d8ec', '#218380', '#5ddfdd', '#3aa372'];

// second block, bottom to top: colour and [month, top] points
const late = [
    ['#8fca33', [47, 2279, 50, 2262, 55, 2296, 60, 2330, 63, 2341, 64, 2349]],
    ['#c3d8ec', [45, 2260, 46, 2246, 47, 2161, 50, 2142, 55, 2180, 60, 2215, 64, 2222, 66, 2243, 70, 2245, 75, 2278, 80, 2300, 85, 2312, 90, 2335, 92, 2349]],
    ['#3d6b93', [45, 2200, 47, 2078, 49, 2036, 50, 2045, 55, 2082, 60, 2115, 65, 2140, 70, 2170, 75, 2200, 80, 2225, 85, 2256, 90, 2315, 95, 2335, 100, 2340, 120, 2349]],
    ['#2f4453', [45, 2100, 46, 2079, 47, 1927, 48, 1905, 49, 1830, 50, 1815, 51, 1840, 52, 1894, 53, 1921, 54, 1900, 55, 1915, 56, 1940, 57, 1945, 58, 1984, 59, 1967, 60, 1960, 61, 1952, 62, 1969, 63, 1967, 64, 2013, 65, 1992, 66, 2013, 67, 2027, 68, 2074, 69, 2085, 70, 2043, 71, 2043, 72, 2078, 73, 2089, 75, 2098, 80, 2130, 82, 2105, 85, 2152, 90, 2217, 95, 2265, 98, 2242, 100, 2278, 103, 2280, 106, 2252, 110, 2290, 115, 2315, 120, 2330, 130, 2343, 133, 2349]],
    ['#2e86ab', [46, 2079, 47, 1843, 48, 1814, 49, 1740, 50, 1728, 51, 1747, 52, 1801, 53, 1831, 54, 1807, 55, 1821, 56, 1848, 57, 1852, 58, 1899, 59, 1873, 60, 1868, 61, 1861, 62, 1877, 63, 1882, 64, 1926, 65, 1902, 66, 1927, 67, 1941, 68, 1969, 69, 1990, 70, 1946, 71, 1957, 72, 1984, 73, 2012, 74, 2012, 75, 2035, 76, 2028, 77, 2041, 78, 2060, 80, 2076, 85, 2138, 90, 2200, 95, 2256, 98, 2232, 100, 2270, 106, 2242, 110, 2282, 115, 2305, 120, 2318, 130, 2326, 136, 2349]],
    ['#c6d8ec', [48, 1814, 49, 1688, 51, 1690, 52, 1751, 53, 1790, 54, 1740, 56, 1802, 57, 1811, 58, 1863, 59, 1846, 60, 1836, 61, 1824, 62, 1843, 63, 1843, 64, 1888, 65, 1864, 66, 1890, 67, 1905, 68, 1941, 69, 1966, 70, 1916, 71, 1930, 72, 1956, 73, 1987, 74, 1983, 75, 2007, 76, 2015, 77, 2000, 78, 2020, 80, 2048, 85, 2092, 90, 2183, 95, 2232, 100, 2243, 106, 2218, 110, 2248, 115, 2278, 120, 2293, 130, 2302, 134, 2312, 139, 2349]],
    ['#218380', [48, 1814, 49, 1655, 50, 1657, 51, 1668, 52, 1719, 53, 1760, 54, 1716, 56, 1785, 57, 1801, 58, 1847, 59, 1833, 60, 1819, 61, 1804, 62, 1825, 63, 1826, 64, 1872, 65, 1849, 66, 1878, 67, 1892, 68, 1929, 69, 1955, 70, 1904, 71, 1917, 72, 1944, 73, 1975, 74, 1963, 75, 1993, 76, 1995, 77, 1988, 78, 2012, 80, 2036, 85, 2082, 88, 2160, 90, 2180, 95, 2232, 100, 2243, 139, 2349]],
    ['#5ddfdd', [57, 1801, 59, 1790, 60, 1770, 61, 1736, 63, 1740, 65, 1778, 66, 1806, 67, 1837, 68, 1878, 69, 1814, 70, 1818, 71, 1847, 72, 1888, 73, 1872, 74, 1908, 75, 1914, 76, 1913, 77, 1951, 78, 1930, 80, 1944, 85, 2000, 90, 2084, 95, 2143, 101, 2175, 106, 2148, 110, 2180, 115, 2205, 120, 2248, 125, 2262, 130, 2284, 135, 2317, 140, 2349]],
    ['#3aa372', [48, 1814, 49, 1627, 50, 1590, 51, 1591, 52, 1647, 53, 1685, 54, 1624, 55, 1648, 56, 1692, 57, 1702, 58, 1758, 59, 1739, 60, 1676, 61, 1623, 62, 1643, 63, 1619, 64, 1674, 65, 1664, 67, 1692, 69, 1772, 70, 1700, 71, 1706, 72, 1750, 73, 1781, 74, 1766, 75, 1806, 77, 1813, 78, 1868, 80, 1890, 82, 1829, 85, 1940, 87, 1905, 90, 1975, 92, 2010, 95, 2040, 100, 2104, 101, 2131, 106, 2099, 110, 2126, 114, 2120, 117, 2158, 120, 2185, 123, 2202, 130, 2248, 135, 2280, 140, 2310, 150, 2335, 156, 2349]],
    ['#fb5f63', [63, 1619, 64, 1630, 65, 1602, 66, 1637, 67, 1635, 68, 1645, 69, 1715, 70, 1628, 71, 1632, 72, 1683, 73, 1718, 74, 1697, 75, 1743, 77, 1748, 78, 1801, 79, 1812, 80, 1856, 81, 1797, 82, 1776, 83, 1850, 84, 1858, 85, 1876, 86, 1850, 88, 1902, 90, 1940, 92, 1988, 95, 2037, 100, 2105, 105, 2072, 110, 2092, 113, 2089, 115, 2121, 117, 2146, 123, 2180, 130, 2216, 134, 2243, 139, 2283, 145, 2298, 150, 2318, 155, 2325, 159, 2345, 161, 2349]],
    ['#2a8db2', [71, 1632, 72, 1589, 73, 1618, 74, 1617, 75, 1663, 76, 1667, 77, 1676, 78, 1732, 79, 1749, 80, 1780, 81, 1727, 82, 1695, 83, 1790, 84, 1792, 85, 1876, 86, 1785, 87, 1830, 88, 1843, 89, 1855, 90, 1873, 91, 1918, 93, 1922, 95, 1945, 97, 1969, 99, 2004, 100, 2039, 102, 2024, 104, 2034, 105, 1999, 107, 1992, 110, 2027, 113, 2041, 114, 2029, 117, 2059, 120, 2104, 125, 2129, 130, 2156, 134, 2183, 139, 2233, 145, 2248, 150, 2273, 155, 2278, 160, 2300, 163, 2317, 170, 2335, 176, 2349]],
    ['#fb5f63', [80, 1780, 81, 1704, 82, 1668, 83, 1763, 84, 1769, 85, 1868, 86, 1763, 87, 1808, 88, 1824, 89, 1835, 90, 1855, 91, 1902, 92, 1893, 93, 1907, 95, 1932, 97, 1960, 100, 2012, 102, 2010, 105, 1979, 107, 1985, 110, 2016, 113, 2026, 114, 2021, 117, 2050, 120, 2095, 125, 2120, 130, 2149, 134, 2177, 139, 2231, 176, 2349]],
    ['#8fca33', [92, 1893, 93, 1852, 95, 1860, 97, 1912, 99, 1952, 100, 1984, 101, 1958, 104, 1994, 105, 1960, 107, 1976, 110, 2005, 113, 2008, 114, 2004, 117, 2036, 120, 2084, 125, 2104, 130, 2139, 134, 2160, 139, 2220, 145, 2243, 150, 2266, 155, 2272, 160, 2294, 170, 2328, 178, 2349]],
    ['#fdd06a', [93, 1852, 94, 1850, 95, 1838, 96, 1865, 97, 1852, 98, 1842, 99, 1858, 100, 1900, 101, 1874, 102, 1895, 103, 1902, 104, 1893, 105, 1866, 107, 1893, 110, 1920, 113, 1928, 114, 1925, 116, 1960, 120, 2012, 125, 2037, 130, 2090, 134, 2119, 139, 2173, 145, 2208, 150, 2232, 155, 2243, 160, 2268, 165, 2296, 170, 2308, 175, 2335, 180, 2349]],
    ['#95cd7a', [104, 1893, 105, 1807, 106, 1817, 107, 1841, 108, 1807, 109, 1809, 110, 1829, 111, 1840, 112, 1833, 113, 1852, 114, 1852, 115, 1890, 117, 1860, 120, 1940, 125, 1997, 130, 2066, 134, 2089, 139, 2153, 145, 2193, 150, 2218, 155, 2232, 160, 2260, 165, 2292, 170, 2308, 180, 2349]],
    ['#c3d8ec', [109, 1809, 110, 1777, 111, 1793, 112, 1784, 113, 1803, 114, 1804, 115, 1845, 116, 1900, 117, 1813, 118, 1854, 119, 1860, 120, 1888, 123, 1930, 127, 1970, 130, 1995, 134, 2026, 139, 2112, 145, 2146, 150, 2172, 155, 2192, 160, 2222, 165, 2256, 170, 2288, 175, 2318, 180, 2342, 184, 2349]],
    ['#3d6284', [119, 1860, 120, 1846, 121, 1857, 122, 1870, 124, 1902, 126, 1915, 128, 1950, 130, 1976, 132, 1982, 134, 2004, 139, 2090, 145, 2124, 150, 2148, 155, 2168, 160, 2201, 165, 2238, 170, 2273, 172, 2298, 175, 2300, 180, 2332, 183, 2349]],
    ['#e2fcfb', [122, 1870, 123, 1858, 125, 1868, 126, 1870, 128, 1895, 130, 1922, 132, 1934, 134, 1949, 136, 1990, 139, 2034, 145, 2074, 150, 2102, 155, 2119, 160, 2153, 165, 2193, 170, 2233, 175, 2263, 180, 2293, 182, 2332, 188, 2325]],
    ['#fdc95d', [128, 1895, 129, 1904, 130, 1869, 131, 1883, 132, 1883, 133, 1897, 135, 1934, 139, 1984, 145, 2036, 150, 2049, 155, 2094, 160, 2128, 165, 2168, 170, 2196, 175, 2228, 180, 2268, 183, 2307, 188, 2303]],
    ['#3d5f80', [132, 1883, 133, 1871, 134, 1872, 135, 1879, 136, 1904, 137, 1927, 138, 1951, 140, 1964, 143, 1987, 145, 2020, 150, 2024, 152, 2042, 155, 2050, 160, 2099, 165, 2138, 170, 2178, 175, 2218, 180, 2248, 183, 2290, 188, 2283]],
    ['#d81b60', [143, 1987, 144, 1988, 145, 1958, 146, 1965, 148, 1963, 150, 1960, 151, 1978, 154, 1978, 156, 2006, 158, 2024, 160, 2046, 165, 2084, 168, 2112, 170, 2110, 171, 2142, 175, 2158, 177, 2136, 180, 2193, 183, 2228, 186, 2244, 188, 2223]],
    ['#3d5f80', [146, 1965, 147, 1932, 149, 1932, 150, 1917, 151, 1944, 154, 1952, 158, 2007, 160, 2034, 165, 2070, 170, 2098, 175, 2130, 180, 2170, 183, 2205, 186, 2230, 188, 2205]],
    ['#77d3da', [150, 1917, 151, 1880, 152, 1893, 154, 1890, 155, 1895, 157, 1930, 160, 1964, 165, 2015, 170, 2050, 175, 2094, 180, 2129, 183, 2176, 186, 2180, 188, 2168]],
    ['#5a70c8', [153, 1893, 154, 1854, 155, 1863, 156, 1882, 158, 1902, 160, 1930, 162, 1944, 165, 1988, 170, 2022, 175, 2072, 178, 2089, 180, 2092, 183, 2148, 186, 2166, 188, 2150]],
    ['#a0e292', [155, 1863, 156, 1835, 157, 1854, 158, 1857, 160, 1880, 162, 1890, 163, 1917, 165, 1920, 167, 1947, 168, 1960, 170, 1960, 171, 1996, 175, 2014, 177, 2010, 180, 2049, 183, 2118, 186, 2138, 188, 2099]],
    ['#a0c4dd', [168, 1960, 169, 1935, 170, 1892, 171, 1939, 172, 1964, 174, 1960, 175, 1995, 176, 1968, 177, 1944, 178, 1976, 179, 1979, 180, 1994, 181, 1994, 182, 2143, 183, 2067, 184, 2117, 185, 2106, 186, 2089, 187, 2092, 188, 2052]]
];

function topAt(points, month) {
    if (month < points[0]) return BASE;
    for (let k = 0; k < points.length - 2; k += 2) {
        const [m0, y0, m1, y1] = points.slice(k, k + 4);
        if (month <= m1) return y0 + (y1 - y0) * (month - m0) / (m1 - m0);
    }
    return points[points.length - 1];
}

const barX = month => 245.6 + 6.79 * month;
const bars = el(chart, 'g', { class: 'bars' });
const segments = {};
function addBar(color, x, from, to) {
    segments[color] = (segments[color] || '') + `M${x.toFixed(1)} ${from.toFixed(1)}V${to.toFixed(1)}`;
}

early.forEach((tops, month) => {
    let floor = BASE;
    tops.forEach((y, k) => {
        addBar(earlyColors[k], barX(month), floor, y);
        floor = y;
    });
});
for (let month = 45; month <= 188; month++) {
    // monthly wobble, stronger where the wells are stacked higher
    const wobble = month < 80 ? 0 : Math.sin(month * 2.3) * 5 + Math.sin(month * 5.1) * 5;
    let floor = BASE;
    late.forEach(([color, points], k) => {
        let y = topAt(points, month);
        if (y >= BASE) return;
        y = Math.min(BASE, y + (wobble + Math.sin(month * 1.7 + k) * 2) * (BASE - y) / 450);
        if (y < floor) {
            addBar(color, barX(month), floor, y);
            floor = y;
        }
    });
}
for (const color in segments) el(bars, 'path', { class: 'haze', d: segments[color], stroke: color });
for (const color in segments) el(bars, 'path', { d: segments[color], stroke: color });

for (const [label, y] of yTicks) el(chart, 'text', { class: 'axis-text', x: 206, y: y + 7, 'text-anchor': 'end' }, String(label));
for (const [label, x] of xTicks) {
    el(chart, 'line', { x1: x, x2: x, y1: BASE, y2: BASE + 11, stroke: '#222', 'stroke-width': 2 });
    el(chart, 'text', { class: 'axis-text', x, y: 2395, 'text-anchor': 'middle' }, String(label));
}
el(chart, 'text', { class: 'axis-text', x: 1025, y: 2433, 'text-anchor': 'middle' }, 'Date');
el(chart, 'text', { class: 'axis-text', transform: 'translate(124 1872) rotate(-90)', 'text-anchor': 'middle', textLength: 210 }, 'Custom y axis 1');
el(chart, 'path', { d: `M${LEFT - 2} ${BASE}H${RIGHT}`, stroke: '#222', 'stroke-width': 3 });
el(chart, 'path', { d: `M${LEFT} 1394V${BASE + 2}`, stroke: '#000', 'stroke-width': 7 });
el(chart, 'path', { d: `M${LEFT - 1} 1398V1465M${LEFT - 1} 2235V2346`, stroke: '#999', 'stroke-width': 1.5 });
for (const y of [1477, 2223]) el(chart, 'circle', { cx: LEFT, cy: y, r: 11.5, fill: '#fff', stroke: '#111', 'stroke-width': 2 });

const legend = [
    ['Well_02', '#fbb03b'], ['Well_03', '#9b5fb5'], ['Well_04', '#2e86ab'], ['Well_06', '#ff6663'], ['Well_08', '#8ac926'], ['Well_09', '#9fe394'],
    ['Well_11', '#2f4858'], ['Well_12', '#bfd5ea'], ['Well_13', '#70d2db'], ['Well_14', '#546fc6'], ['Well_15', '#218380'], ['Well_16', '#fec93b'],
    ['Well_17', '#8b2b55'], ['Well_18', '#57dfe0'], ['Well_19', '#ee6467'], ['Well_20', '#ea7bcb'], ['Well_21', '#bfd5ea']
];
document.getElementById('legend').innerHTML = legend.map(([name, color]) => `<li><i style="background:${color}"></i>${name}</li>`).join('');
```
